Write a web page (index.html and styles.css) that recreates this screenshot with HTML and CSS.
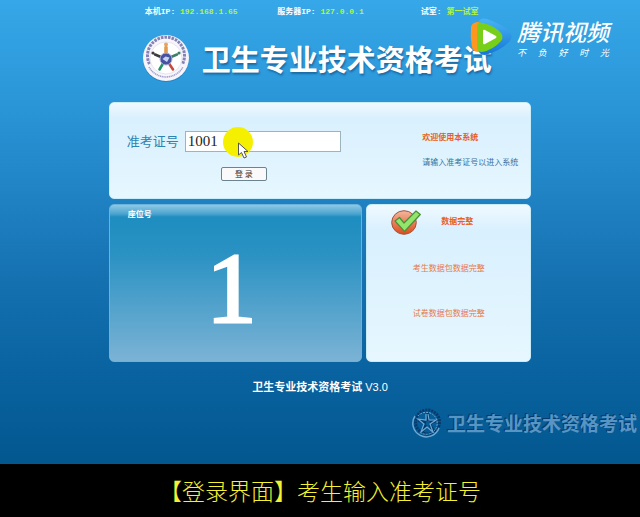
FILE: index.html
```html
<!DOCTYPE html>
<html lang="zh-CN">
<head>
<meta charset="utf-8">
<title>卫生专业技术资格考试</title>
<link rel="stylesheet" href="styles.css">
</head>
<body>
<main class="screen">
  <div class="wrap">
    <ul class="status">
      <li>本机IP: <span class="value">192.168.1.65</span></li>
      <li>服务器IP: <span class="value">127.0.0.1</span></li>
      <li>试室: <span class="value">第一试室</span></li>
    </ul>

    <header class="brand">
      <svg class="emblem" viewBox="0 0 48 48" aria-hidden="true">
        <circle cx="24" cy="25" r="23" fill="#1b6fa6" opacity=".5"/>
        <circle cx="24" cy="24" r="23" fill="#f7f5fb"/>
        <path d="M7.500 30A18.500 18.500 0 1 1 40.500 30" fill="none" stroke="#8583b6" stroke-width="3" stroke-dasharray="2.600 1"/>
        <path d="M7 33A19.500 19.500 0 0 0 41 33" fill="none" stroke="#9f9dc8" stroke-width="1.500" stroke-dasharray="1.200 .6"/>
        <circle cx="24" cy="24" r="16" fill="#fff" stroke="#d5d3e6" stroke-width=".6"/>
        <g fill="none" stroke-width="2.600" stroke-linecap="round">
          <path d="M24 13.500v5" stroke="#e39a4c" stroke-width="3.600"/>
          <path d="M13 20.500l6 2.500" stroke="#3b3b40"/>
          <path d="M35 20.500l-6 2.500" stroke="#3f7f6a"/>
          <path d="M21 29.500l-3.500 6" stroke="#1f9568"/>
          <path d="M27 29.500l4 6" stroke="#c8473f"/>
        </g>
        <circle cx="24" cy="10.500" r="2" fill="#e3a45c"/>
        <circle cx="11" cy="19" r="1.600" fill="#3b3b40"/>
        <circle cx="37" cy="19" r="1.600" fill="#3f7f6a"/>
        <circle cx="24" cy="25" r="6" fill="#4753a0" stroke="#a9aed6"/>
        <path d="M20.500 25l3-2.500 4 1-2.500 4.500z" fill="#c8d2f2"/>
      </svg>
      <h1 class="title">卫生专业技术资格考试</h1>
    </header>

    <form class="panel login">
      <div class="entry">
        <div class="field">
          <label for="ticket">准考证号</label>
          <div class="inputbox">
            <input id="ticket" type="text" value="1001">
            <svg class="pointer" viewBox="0 0 32 34" aria-hidden="true">
              <circle cx="15" cy="15" r="15" fill="#f4f000"/>
              <path d="M15.500 16v12l3-2.500 2.500 5.500 2.500-1-2.500-5.500h4z" fill="#fff" stroke="#555" stroke-width="1"/>
            </svg>
          </div>
        </div>
        <button type="button" class="submit">登 录</button>
      </div>
      <div class="welcome">
        <strong>欢迎使用本系统</strong>
        <p>请输入准考证号以进入系统</p>
      </div>
    </form>

    <div class="row">
      <section class="seat">
        <h2>座位号</h2>
        <p class="number">1</p>
      </section>
      <section class="panel check">
        <div class="result">
          <svg class="tick" viewBox="0 0 30 26" aria-hidden="true">
            <defs>
              <linearGradient id="ball" x2="0" y2="1"><stop stop-color="#f3b79c"/><stop offset="1" stop-color="#dc4a1c"/></linearGradient>
            </defs>
            <ellipse cx="13" cy="13.500" rx="12.300" ry="11.800" fill="url(#ball)" stroke="#a0543c" stroke-width="1"/>
            <path d="M4 12l4.500-3.500 4.500 5.500L25 2l4.300 3.500L13.500 22.500z" fill="#93e46a" stroke="#4a8f3a" stroke-width="1.200" stroke-linejoin="round"/>
          </svg>
          <strong>数据完整</strong>
        </div>
        <p>考生数据包数据完整</p>
        <p>试卷数据包数据完整</p>
      </section>
    </div>

    <p class="version">卫生专业技术资格考试 <span>V3.0</span></p>
  </div>

  <div class="stamp">
    <svg class="seal" viewBox="0 0 30 30" aria-hidden="true">
      <g fill="none" stroke="#07396b">
        <circle cx="15.500" cy="14" r="12" stroke-width="3" stroke-dasharray="2 1"/>
        <path d="M16 5v8M6 12l8 3M25 12l-7 3M10 24l4-7M22 24l-4-7" stroke-width="3"/>
      </g>
      <g fill="none" stroke="#6fa9d3">
        <path d="M3 8A13.500 13.500 0 1 0 27 20" stroke-width="1.500"/>
        <path d="M6 8A11 11 0 1 1 9 25" stroke-width="1" stroke-dasharray="2 1"/>
        <path d="M14 6v6l-8-1 6 5-3 8 6-5 6 5-3-8 6-4h-7l-1-6" stroke-width="1.200"/>
      </g>
    </svg>
    <span>卫生专业技术资格考试</span>
  </div>

  <div class="video">
    <svg class="play" viewBox="0 0 42 38" aria-hidden="true">
      <defs>
        <linearGradient id="wing" x2="0" y2="1"><stop stop-color="#48b4f4"/><stop offset="1" stop-color="#1576d6"/></linearGradient>
      </defs>
      <path d="M8 5Q10-1 17 1Q34 7 40 14Q44 19 39 24Q30 33 15 37Q9 37 8 31z" fill="url(#wing)"/>
      <path d="M9 4Q2 4 1 9Q0 19 2 29Q3 34 9 34z" fill="#ff961f"/>
      <path d="M7 9Q7 3 13 5Q25 8 31 15Q34 19 31 23Q23 32 12 34Q7 34 7 29z" fill="#78cf19"/>
      <path d="M13 13Q13 11 15 12L26 18Q27 19 26 20L15 26Q13 27 13 25z" fill="#fff"/>
    </svg>
    <div class="words">
      <span class="name">腾讯视频</span>
      <span class="slogan"><i>不</i><i>负</i><i>好</i><i>时</i><i>光</i></span>
    </div>
  </div>
</main>
<footer class="caption">【登录界面】考生输入准考证号</footer>
</body>
</html>
```

FILE: styles.css
```css
* {
  box-sizing: border-box;
}

body,
h1,
h2,
p,
ul {
  margin: 0;
  padding: 0;
}

body {
  min-height: 100vh;
  display: flex;
  flex-direction: column;
  overflow-x: hidden;
  background: #000;
  font-family: "Liberation Serif", "Noto Sans CJK SC", serif;
  font-size: 8px;
}

.screen {
  position: relative;
  flex: 1;
  overflow: hidden;
  padding-top: 6px;
  background: linear-gradient(#36a7e8, #2a96d8 22%, #1671b1 60%, #0963a0 80%, #03578f);
}

.wrap {
  width: 66%;
  margin: 0 auto;
}

.status {
  display: grid;
  grid-template-columns: 12fr 13fr 10fr;
  list-style: none;
  padding-left: 36px;
  color: #fff;
  font-family: "Liberation Mono", "Noto Sans CJK SC", monospace;
  font-weight: bold;
  line-height: 12px;
  white-space: nowrap;
}

.value {
  color: #b4f53c;
}

.brand {
  display: flex;
  align-items: center;
  gap: 12px;
  height: 84px;
  padding: 0 0 4px 33px;
}

.emblem {
  width: 48px;
  height: 48px;
  flex: none;
}

.title {
  color: #fff;
  font: bold 29px/36px "Noto Sans CJK SC", sans-serif;
  text-shadow: 1px 2px 2px #1a6ba5;
  white-space: nowrap;
}

.panel {
  border: 1px solid #c9ecfb;
  border-radius: 5px;
  background: linear-gradient(#f0f9ff, #d9f0fe 16%, #e6f7ff);
}

.login {
  display: flex;
  justify-content: space-between;
  height: 97px;
  padding: 28px 12px 0 17px;
}

.entry {
  display: flex;
  flex-direction: column;
  align-items: center;
  gap: 15px;
}

.field {
  display: flex;
  align-items: center;
  gap: 6px;
}

.field label {
  color: #2e83b0;
  font-size: 13px;
  line-height: 20px;
}

.inputbox {
  position: relative;
}

.field input {
  display: block;
  width: 156px;
  height: 21px;
  padding: 0 2px;
  border: 1px solid #9cb4be;
  background: #fff;
  color: #222;
  font: 15px/18px "Liberation Serif", serif;
}

.pointer {
  position: absolute;
  left: 38px;
  top: -4px;
  width: 32px;
  height: 34px;
}

.submit {
  width: 46px;
  height: 14px;
  margin-left: 20px;
  padding: 0;
  border: 1px solid #6b8490;
  border-radius: 2px;
  background: #fafafa;
  color: #333;
  font: 8px/10px "Noto Sans CJK SC", sans-serif;
}

.welcome {
  color: #3a6f96;
  line-height: 13px;
}

.welcome strong,
.result strong {
  color: #e8601c;
}

.welcome p {
  margin-top: 12px;
}

.row {
  display: grid;
  grid-template-columns: 20fr 13fr;
  gap: 4px;
  height: 158px;
  margin-top: 5px;
}

.seat {
  padding: 4px 18px;
  border: 1px solid #6bb3da;
  border-radius: 5px;
  background: linear-gradient(#8ec8e4, #4ba3cf 9px, #1e8dc0 12px, #2b92c3 50px, #7bb3d5);
  color: #fff;
  text-align: center;
}

.seat h2 {
  font-size: 8px;
  line-height: 12px;
  text-align: left;
}

.number {
  padding: 8px 8px 0 0;
  font: 100px/120px "Liberation Serif", serif;
  -webkit-text-stroke: 3px #fff;
}

.check {
  padding: 4px 24px;
  color: #e77a48;
  line-height: 12px;
  text-align: center;
}

.result {
  display: flex;
  align-items: center;
  gap: 20px;
}

.tick {
  width: 30px;
  height: 26px;
}

.check p {
  margin-top: 28px;
}

.check p + p {
  margin-top: 33px;
}

.version {
  margin-top: 17px;
  color: #fff;
  font: bold 11px/16px "Liberation Sans", "Noto Sans CJK SC", sans-serif;
  text-align: center;
}

.version span {
  font-weight: normal;
}

.stamp {
  position: absolute;
  right: 0;
  bottom: 26px;
  display: flex;
  align-items: center;
  gap: 5px;
  padding-right: 3px;
  color: #5795c4;
  font: bold 19px/30px "Noto Sans CJK SC", sans-serif;
  text-shadow: -1px -1px 0 #07396b;
  white-space: nowrap;
}

.seal {
  width: 30px;
  height: 30px;
}

.video {
  position: absolute;
  right: 31px;
  top: 18px;
  display: flex;
  gap: 5px;
  color: #fff;
  font-family: "Noto Sans CJK SC", sans-serif;
}

.play {
  width: 42px;
  height: 38px;
}

.words {
  display: flex;
  flex-direction: column;
}

.name {
  font-size: 23px;
  font-style: italic;
  font-weight: 500;
  line-height: 26px;
}

.slogan {
  display: flex;
  justify-content: space-between;
  margin-top: 2px;
  font-size: 9px;
  line-height: 14px;
}

.caption {
  height: 53px;
  color: #f5f032;
  font: 300 23px/52px "Noto Sans CJK SC", sans-serif;
  text-align: center;
  white-space: nowrap;
}
```
